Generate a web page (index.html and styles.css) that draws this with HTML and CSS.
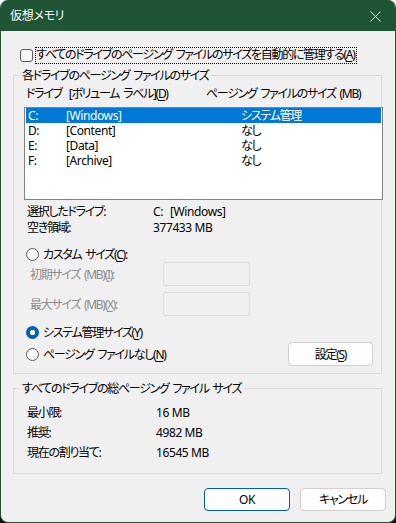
FILE: index.html
```html
<!DOCTYPE html>
<html lang="ja">
<head>
    <meta charset="UTF-8">
    <title>仮想メモリ</title>
    <link rel="stylesheet" href="styles.css">
</head>
<body>
    <div class="window">
        <div class="titlebar">
            <span class="title">仮想メモリ</span>
            <span class="close">
                <svg width="11" height="11" viewBox="0 0 11 11"><path d="M0.5 0.5L10.5 10.5M10.5 0.5L0.5 10.5" stroke="#fff" stroke-width="1"/></svg>
            </span>
        </div>

        <div class="content">
            <div class="check-row">
                <span class="checkbox"></span>
                <span class="focus-label">すべてのドライブのページング ファイルのサイズを自動的に管理する(<u>A</u>)</span>
            </div>

            <fieldset class="group group-drives">
                <legend>各ドライブのページング ファイルのサイズ</legend>
                <div class="list-header">
                    <span class="col-head">ドライブ<span class="gap"></span>[ボリューム ラベル](<u>D</u>)</span>
                    <span class="col-head-size">ページング ファイルのサイズ (MB)</span>
                </div>
                <div class="listbox">
                    <div class="list-row selected"><span class="latin">C:</span><span class="latin">[Windows]</span><span>システム管理</span></div>
                    <div class="list-row"><span class="latin">D:</span><span class="latin">[Content]</span><span>なし</span></div>
                    <div class="list-row"><span class="latin">E:</span><span class="latin">[Data]</span><span>なし</span></div>
                    <div class="list-row"><span class="latin">F:</span><span class="latin">[Archive]</span><span>なし</span></div>
                </div>

                <div class="info first-info"><span class="info-label">選択したドライブ:</span><span class="latin">C:<span class="gap"></span>[Windows]</span></div>
                <div class="info"><span class="info-label">空き領域:</span><span class="latin">377433 MB</span></div>

                <div class="radio-row custom">
                    <span class="radio"></span>
                    <span>カスタム サイズ(<u>C</u>):</span>
                </div>
                <div class="size-row">
                    <span class="size-label">初期サイズ (MB)(<u>I</u>):</span>
                    <span class="textbox"></span>
                </div>
                <div class="size-row second">
                    <span class="size-label">最大サイズ (MB)(<u>X</u>):</span>
                    <span class="textbox"></span>
                </div>
                <div class="radio-row system">
                    <span class="radio checked"></span>
                    <span>システム管理サイズ(<u>Y</u>)</span>
                </div>
                <div class="radio-row none">
                    <span class="radio"></span>
                    <span>ページング ファイルなし(<u>N</u>)</span>
                    <button class="btn btn-set">設定(<u>S</u>)</button>
                </div>
            </fieldset>

            <fieldset class="group group-total">
                <legend>すべてのドライブの総ページング ファイル サイズ</legend>
                <div class="total-row"><span class="total-label">最小限:</span><span class="latin">16 MB</span></div>
                <div class="total-row"><span class="total-label">推奨:</span><span class="latin">4982 MB</span></div>
                <div class="total-row"><span class="total-label">現在の割り当て:</span><span class="latin">16545 MB</span></div>
            </fieldset>

            <div class="footer">
                <button class="btn btn-ok"><span class="latin">OK</span></button>
                <button class="btn">キャンセル</button>
            </div>
        </div>
    </div>
</body>
</html>
```

FILE: styles.css
```css
* {
    margin: 0;
    padding: 0;
    box-sizing: border-box;
}

body {
    background: linear-gradient(#ffffff 50%, #101010 50%);
    font-family: "Noto Sans", "Noto Sans CJK JP", sans-serif;
    font-feature-settings: "palt";
    font-size: 12px;
    line-height: 15px;
    letter-spacing: -1.3px;
    word-spacing: 2px;
    color: #000;
}

.latin {
    letter-spacing: -0.4px;
    word-spacing: 0;
}

.gap {
    display: inline-block;
    width: 7px;
}

u {
    text-decoration-thickness: 1px;
    text-underline-offset: 2px;
}

.window {
    width: 396px;
    height: 523px;
    background: #f0f0f0;
    border: 1px solid #1f5434;
    border-top: none;
    border-radius: 8px;
    overflow: hidden;
}

.titlebar {
    height: 31px;
    background: #1f5434;
    color: #fff;
    display: flex;
    align-items: center;
    justify-content: space-between;
    padding: 0 15px 0 10px;
    margin: 0 -1px;
}

.title {
    font-size: 12px;
    letter-spacing: -0.3px;
}

.close {
    display: flex;
    padding-top: 1px;
}

.content {
    padding: 0 9px 0 12px;
}

/* top checkbox */
.check-row {
    display: flex;
    align-items: center;
    height: 17px;
    margin-top: 16px;
}

.checkbox {
    width: 13px;
    height: 13px;
    border: 1px solid #5a5a5a;
    border-radius: 3px;
    background: #f7f7f7;
    margin-left: 7px;
}

.focus-label {
    margin-left: 2px;
    padding: 0 2px 0 1px;
    height: 17px;
    line-height: 16px;
    white-space: nowrap;
    outline: 1px dotted #000;
    outline-offset: -1px;
}

/* group boxes */
.group {
    width: 369px;
    border: 1px solid #dadada;
    padding: 0 0 7px 10px;
    min-width: 0;
}

.group legend {
    margin-left: -4px;
    padding: 0 3px 0 2px;
    line-height: 15px;
}

.group-drives {
    margin-top: 4px;
}

.group-total {
    margin-top: 7px;
    padding-bottom: 11px;
}

.list-header {
    display: flex;
    margin-top: 3px;
    padding-left: 2px;
    white-space: nowrap;
}

.col-head {
    width: 180px;
}

.listbox {
    width: 359px;
    height: 93px;
    margin-top: 6px;
    border: 1px solid #828282;
    background: #fff;
    padding: 0 1px;
}

.list-row {
    display: grid;
    grid-template-columns: 38px 175px 1fr;
    height: 15px;
    padding-left: 2px;
}

.list-row.selected {
    background: #0078d7;
    color: #fff;
}

.info {
    display: grid;
    grid-template-columns: 126px 1fr;
    height: 16px;
    padding-left: 3px;
}

.first-info {
    margin-top: 4px;
}

/* radios */
.radio-row {
    display: flex;
    align-items: center;
    gap: 4px;
    padding-left: 2px;
}

.radio-row.custom {
    margin-top: 11px;
    height: 15px;
}

.radio-row.system {
    margin-top: 9px;
    height: 15px;
}

.radio-row.none {
    margin-top: 2px;
    height: 24px;
}

.radio {
    width: 13px;
    height: 13px;
    border: 1px solid #5a5a5a;
    border-radius: 50%;
    background: #f7f7f7;
}

.radio.checked {
    border: none;
    background: radial-gradient(circle, #fff 0 2.5px, #005fb8 3px);
}

.size-row {
    display: flex;
    align-items: center;
    height: 24px;
    padding-left: 6px;
    color: #8c8c8c;
}

.size-row.second {
    margin-top: 6px;
}

.size-label {
    width: 133px;
}

.textbox {
    width: 87px;
    height: 24px;
    border: 1px solid #dcdcdc;
    border-radius: 2px;
}

/* buttons */
.btn {
    font: inherit;
    font-feature-settings: "palt";
    letter-spacing: -1.3px;
    color: #000;
    width: 86px;
    height: 23px;
    background: #fdfdfd;
    border: 1px solid #d0d0d0;
    border-radius: 4px;
    line-height: 15px;
}

.btn-set {
    width: 85px;
    height: 24px;
    margin-left: auto;
    margin-right: 8px;
}

.btn-ok {
    border-color: #005fb8;
}

.total-row {
    display: grid;
    grid-template-columns: 129px 1fr;
    align-items: center;
    height: 20px;
    padding-left: 3px;
}

.group-total legend + .total-row {
    margin-top: 6px;
}

.footer {
    display: flex;
    justify-content: flex-end;
    gap: 10px;
    margin-top: 14px;
}
```
